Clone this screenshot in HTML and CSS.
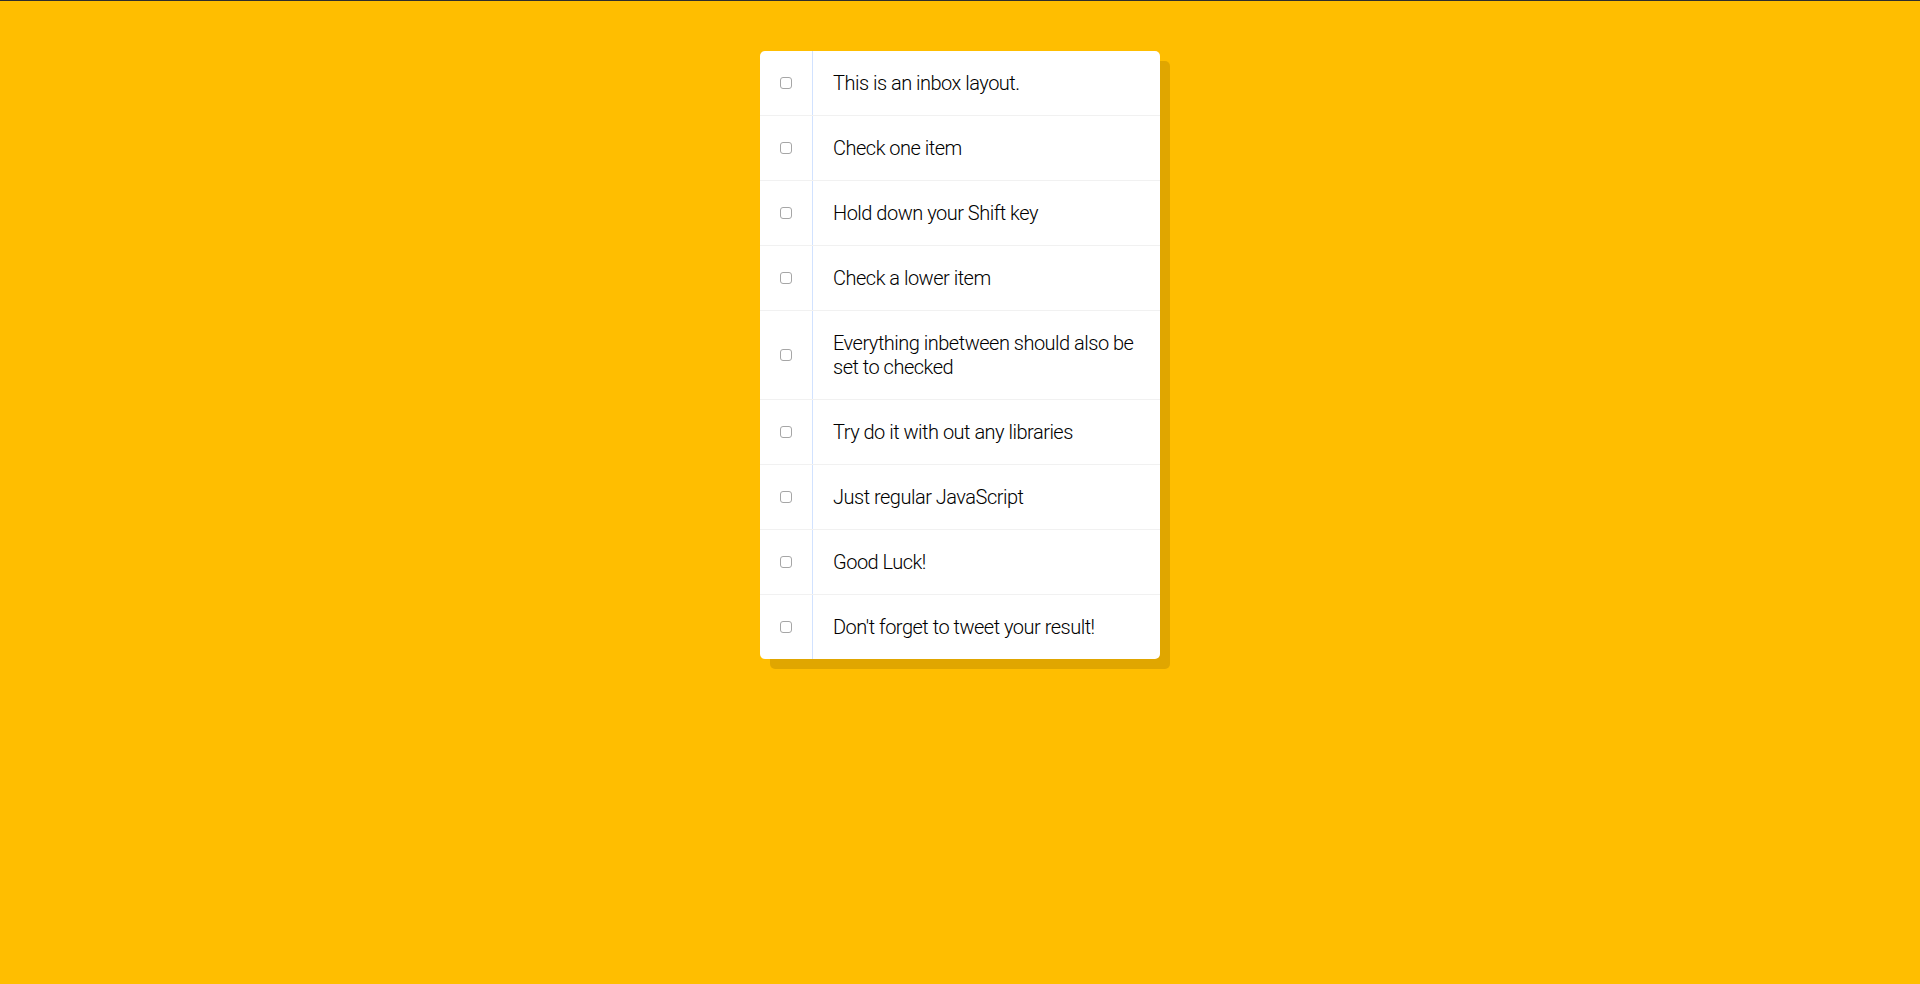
FILE: index.html
```html
<!DOCTYPE html>
<html lang="en">
<head>
<meta charset="UTF-8">
<title>Hold Shift to Check Checkboxes</title>
<link rel="stylesheet" href="styles.css">
</head>
<body>
<div class="topline"></div>
<div class="inbox">
  <div class="item"><input type="checkbox"><p>This is an inbox layout.</p></div>
  <div class="item"><input type="checkbox"><p>Check one item</p></div>
  <div class="item"><input type="checkbox"><p>Hold down your Shift key</p></div>
  <div class="item"><input type="checkbox"><p>Check a lower item</p></div>
  <div class="item"><input type="checkbox"><p>Everything inbetween should also be set to checked</p></div>
  <div class="item"><input type="checkbox"><p>Try do it with out any libraries</p></div>
  <div class="item"><input type="checkbox"><p>Just regular JavaScript</p></div>
  <div class="item"><input type="checkbox"><p>Good Luck!</p></div>
  <div class="item"><input type="checkbox"><p>Don't forget to tweet your result!</p></div>
</div>
</body>
</html>
```
FILE: styles.css
```css
html {
  font-family: "Liberation Sans", sans-serif;
  background: #ffbe00;
}

body {
  margin: 0;
}

.topline {
  height: 1px;
  background: #2e2e2e;
}

.inbox {
  max-width: 400px;
  margin: 50px auto;
  background: #fff;
  border-radius: 5px;
  box-shadow: 10px 10px 0 rgba(0, 0, 0, 0.12);
}

.item {
  display: flex;
  align-items: center;
  border-bottom: 1px solid #f1f1f1;
}

.item:last-child {
  border-bottom: 0;
}

input[type="checkbox"] {
  appearance: none;
  -webkit-appearance: none;
  box-sizing: border-box;
  width: 12px;
  height: 12px;
  margin: 20px;
  border: 1px solid #a6a6a6;
  border-radius: 3px;
  background: #fff;
  flex: none;
}

input[type="checkbox"]:checked {
  background: #3b99fc;
  border-color: #3b99fc;
}

input:checked + p {
  background: #f9f9f9;
  text-decoration: line-through;
}

p {
  margin: 0;
  padding: 20px;
  flex: 1;
  font-family: Roboto, "Liberation Sans", sans-serif;
  font-size: 20px;
  line-height: 24px;
  font-weight: 300;
  letter-spacing: -0.5px;
  color: #000;
  border-left: 1px solid #d1e2ff;
}
```
